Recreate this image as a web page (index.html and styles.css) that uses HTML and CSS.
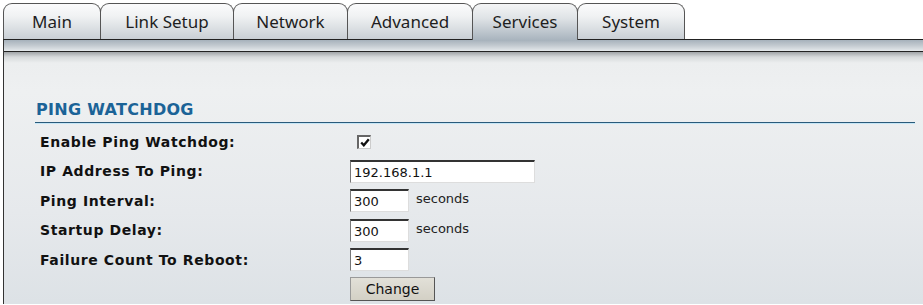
FILE: index.html
```html
<!DOCTYPE html>
<html lang="en">
<head>
  <meta charset="UTF-8" />
  <title>Services - Ping Watchdog</title>
  <link rel="stylesheet" href="styles.css">
</head>
<body>

  <div class="tabs">
    <div class="tab tab-main">Main</div>
    <div class="tab tab-link">Link Setup</div>
    <div class="tab tab-network">Network</div>
    <div class="tab tab-advanced">Advanced</div>
    <div class="tab tab-services active">Services</div>
    <div class="tab tab-system">System</div>
  </div>

  <div class="panel">
    <div class="bar"></div>
    <div class="content">
      <div class="section-title">PING WATCHDOG</div>

      <div class="form-grid">
        <label>Enable Ping Watchdog:</label>
        <div class="field">
          <span class="check">
            <svg width="10" height="9" viewBox="0 0 10 9"><path d="M1.2 4.5 L3.8 7.3 L8.8 1.2" fill="none" stroke="#111" stroke-width="2.3"/></svg>
          </span>
        </div>

        <label>IP Address To Ping:</label>
        <div class="field"><input type="text" class="input-wide" value="192.168.1.1"></div>

        <label>Ping Interval:</label>
        <div class="field"><input type="text" class="input-small" value="300"> <span class="unit">seconds</span></div>

        <label>Startup Delay:</label>
        <div class="field"><input type="text" class="input-small" value="300"> <span class="unit">seconds</span></div>

        <label>Failure Count To Reboot:</label>
        <div class="field"><input type="text" class="input-small" value="3"></div>

        <div></div>
        <div class="field"><button class="btn">Change</button></div>
      </div>
    </div>
  </div>

</body>
</html>
```

FILE: styles.css
```css
body {
  margin: 0;
  background: #fff;
  font-family: 'DejaVu Sans', Verdana, sans-serif;
  color: #111;
}

.tabs {
  display: flex;
  padding: 3px 0 0 3px;
  height: 36px;
}

.tab {
  box-sizing: border-box;
  height: 36px;
  border: 1px solid #555;
  border-bottom: none;
  border-radius: 9px 9px 0 0;
  background: linear-gradient(to bottom, #fbfbfc 0%, #f0f2f3 35%, #c9cfd5 100%);
  font-family: 'Noto Sans', sans-serif;
  font-size: 17px;
  color: #1e1e1e;
  text-align: center;
  line-height: 35px;
  margin-right: -1px;
}

.tab-main { width: 98px; }
.tab-link { width: 134px; }
.tab-network { width: 115px; }
.tab-advanced { width: 126px; }
.tab-services { width: 106px; }
.tab-system { width: 108px; }

.tab.active {
  background: linear-gradient(to bottom, #f4f5f6 0%, #dfe3e6 40%, #a9b4be 100%);
  position: relative;
  z-index: 2;
  height: 37px;
}

.panel {
  border-top: 1px solid #222;
  border-left: 1px solid #333;
  margin-left: 3px;
  background: linear-gradient(to bottom, #eef0f1 0%, #e8ebed 60%, #dde2e6 100%);
}

.bar {
  height: 11px;
  background: linear-gradient(to bottom, #a6b1bb 0%, #c3cad0 50%, #e4e8eb 100%);
  border-bottom: 1px solid #222;
}

.content {
  background: linear-gradient(to bottom, #9fa3a6 0px, #d6d9db 5px, #eceeef 11px, #eef0f1 40px, #e6e9ec 160px, #dde2e6 250px);
  padding: 48px 0 0 31px;
}

.section-title {
  color: #1b6397;
  font-weight: bold;
  font-size: 16px;
  line-height: 19px;
  letter-spacing: 0.3px;
  padding: 0 0 3px 1px;
  border-bottom: 1px solid #2a5a7a;
  box-shadow: 0 1px 0 #c5e6f6;
  margin-right: 8px;
}

.form-grid {
  display: grid;
  grid-template-columns: 310px auto;
  grid-auto-rows: 29.5px;
  margin-top: 4px;
  padding-left: 5px;
}

label {
  font-weight: bold;
  font-size: 14px;
  letter-spacing: 0.6px;
  display: flex;
  align-items: center;
}

.field {
  display: flex;
  align-items: center;
  font-size: 13px;
}

.check {
  box-sizing: border-box;
  width: 14px;
  height: 14px;
  margin-left: 7px;
  border: 2px solid #666;
  border-right: 1px solid #ccc;
  border-bottom: 1px solid #ccc;
  background: #fff;
  display: flex;
  align-items: center;
  justify-content: center;
}

input {
  box-sizing: border-box;
  height: 23px;
  font-family: 'DejaVu Sans', Verdana, sans-serif;
  font-size: 13px;
  color: #111;
  padding: 1px 3px 0;
  background: #fff;
  border: 1px solid #ddd;
  border-top: 2px solid #333;
  border-left-color: #777;
  outline: none;
}

.input-wide { width: 185px; }
.input-small { width: 59px; }

.unit {
  margin-left: 7px;
  color: #222;
  margin-top: -4px;
}

.btn {
  width: 85px;
  height: 24px;
  font-family: 'DejaVu Sans', Verdana, sans-serif;
  font-size: 14px;
  color: #111;
  background: linear-gradient(to bottom, #e2e0d8, #d3d0c5);
  border: 1px solid #555;
  border-top-color: #999;
  border-left-color: #999;
}
```
